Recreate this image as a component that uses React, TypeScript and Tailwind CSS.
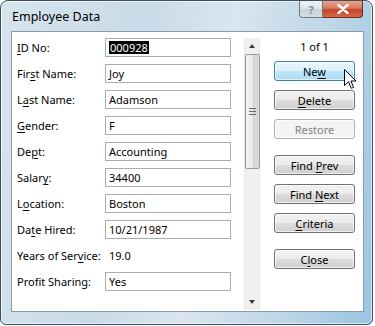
import type { ReactNode } from "react";

type Field = {
  label: string;
  key?: number;
  value: string;
  box?: boolean;
  selected?: boolean;
};

const fields: Field[] = [
  { label: "ID No:", key: 0, value: "000928", box: true, selected: true },
  { label: "First Name:", key: 3, value: "Joy", box: true },
  { label: "Last Name:", key: 1, value: "Adamson", box: true },
  { label: "Gender:", key: 0, value: "F", box: true },
  { label: "Dept:", key: 2, value: "Accounting", box: true },
  { label: "Salary:", key: 5, value: "34400", box: true },
  { label: "Location:", key: 1, value: "Boston", box: true },
  { label: "Date Hired:", key: 2, value: "10/21/1987", box: true },
  { label: "Years of Service:", key: 12, value: "19.0" },
  { label: "Profit Sharing:", value: "Yes", box: true },
];

function Keyed({ text, at }: { text: string; at?: number }) {
  if (at === undefined) return <span>{text}</span>;
  return (
    <span className="whitespace-pre">
      {text.slice(0, at)}
      <span className="underline decoration-1 underline-offset-[1.5px]">
        {text[at]}
      </span>
      {text.slice(at + 1)}
    </span>
  );
}

function VistaButton({
  children,
  hover,
  disabled,
  className = "",
}: {
  children: ReactNode;
  hover?: boolean;
  disabled?: boolean;
  className?: string;
}) {
  let look =
    "border-[#707070] bg-[linear-gradient(#f2f2f2_0%,#ebebeb_48%,#dddddd_52%,#cfcfcf_100%)] text-black";
  if (hover)
    look =
      "border-[#3c7fb1] bg-[linear-gradient(#eaf6fd_0%,#d9f0fc_48%,#bee6fd_52%,#a7d9f5_100%)] text-black";
  if (disabled) look = "border-[#adb2b5] bg-[#f4f4f4] text-[#838383]";
  return (
    <div
      className={`flex h-[20px] w-[81px] items-center justify-center rounded-[3px] border leading-none shadow-[inset_0_0_0_1px_rgba(255,255,255,0.7)] ${look} ${className}`}
    >
      {children}
    </div>
  );
}

function Cursor() {
  return (
    <svg
      className="absolute left-[343px] top-[68px]"
      width="13"
      height="21"
      viewBox="0 0 13 21"
    >
      <path
        d="M0.5 0.5 L0.5 16.5 L4.5 12.8 L7.3 19.3 L9.6 18.3 L6.9 12 L12 12 Z"
        fill="#fff"
        stroke="#000"
        strokeWidth="1"
        strokeLinejoin="round"
      />
    </svg>
  );
}

function Scrollbar() {
  return (
    <div className="mt-[6px] flex h-[272px] w-[16px] flex-col items-center border-x border-[#e6e6e6] bg-[#f0f0f0]">
      <div className="flex h-[16px] w-full items-center justify-center">
        <div className="h-0 w-0 border-x-[3.5px] border-b-[4px] border-x-transparent border-b-[#3c3c3c]" />
      </div>
      <div className="flex h-[115px] w-[15px] flex-col items-center justify-center gap-[2px] rounded-[2px] border border-[#9a9a9a] bg-[linear-gradient(90deg,#f4f4f4_0%,#e8e8e8_50%,#d4d4d4_51%,#dcdcdc_100%)]">
        <div className="h-px w-[7px] bg-[#6b6b6b]" />
        <div className="h-px w-[7px] bg-[#6b6b6b]" />
        <div className="h-px w-[7px] bg-[#6b6b6b]" />
      </div>
      <div className="flex-1" />
      <div className="flex h-[16px] w-full items-center justify-center">
        <div className="h-0 w-0 border-x-[3.5px] border-t-[4px] border-x-transparent border-t-[#3c3c3c]" />
      </div>
    </div>
  );
}

export default function App() {
  return (
    <div className="h-[326px] w-[375px] bg-white font-['Noto_Sans',sans-serif] text-[11px] text-black">
      <div className="relative flex h-[325px] w-[373px] flex-col rounded-t-[8px] rounded-b-[6px] border border-[#3e4f5e] bg-[linear-gradient(100deg,#d6e4ee_0%,#c9dbe8_35%,#d9e6ef_55%,#bcd5e6_80%,#98c5e3_100%)] shadow-[inset_0_0_0_1px_rgba(255,255,255,0.6)]">
        <div className="flex h-[30px] items-start">
          <div className="pl-[11px] pt-[7px] text-[12.5px] text-black">
            Employee Data
          </div>
          <div className="flex-1" />
          <div className="mr-[9px] flex">
            <div className="flex h-[17px] w-[24px] items-center justify-center rounded-bl-[4px] border border-t-0 border-[#6b7b8a] bg-[linear-gradient(#eef2f5_0%,#dce4ea_50%,#c7d1d9_51%,#d6dee4_100%)] text-[11px] font-bold leading-none text-[#7d8c9a]">
              ?
            </div>
            <div className="flex h-[17px] w-[40px] items-center justify-center rounded-br-[4px] border border-l-0 border-t-0 border-[#6e2a1c] bg-[linear-gradient(#e8a48f_0%,#d87a5e_45%,#c2412a_55%,#d8694a_100%)]">
              <svg width="12" height="10" viewBox="0 0 12 10">
                <path
                  d="M1.5 1 L10.5 9 M10.5 1 L1.5 9"
                  stroke="#fff"
                  strokeWidth="2.4"
                  strokeLinecap="round"
                />
              </svg>
            </div>
          </div>
        </div>

        <div className="relative mb-[12px] ml-[10px] mr-[8px] flex flex-1 items-start border border-[#8b9aa9] bg-white">
          <div className="flex flex-col gap-[7px] pl-[5px] pt-[6px]">
            {fields.map((f) => (
              <div key={f.label} className="flex h-[19px] items-center">
                <div className="w-[88px] leading-none">
                  <Keyed text={f.label} at={f.key} />
                </div>
                {f.box ? (
                  <div className="flex h-[19px] w-[126px] items-center border border-[#a7adb5] px-[3px] leading-none">
                    <span
                      className={
                        f.selected ? "bg-black px-px py-[1px] text-white" : ""
                      }
                    >
                      {f.value}
                    </span>
                  </div>
                ) : (
                  <div className="w-[126px] pl-[4px] leading-none">
                    {f.value}
                  </div>
                )}
              </div>
            ))}
          </div>

          <div className="ml-[13px]">
            <Scrollbar />
          </div>

          <div className="ml-[14px] flex flex-col items-center pt-[9px]">
            <div className="h-[20px] leading-none">1 of 1</div>
            <div className="flex flex-col gap-[9px]">
              <VistaButton hover>
                <Keyed text="New" at={2} />
              </VistaButton>
              <VistaButton>
                <Keyed text="Delete" at={0} />
              </VistaButton>
              <VistaButton disabled>Restore</VistaButton>
              <VistaButton className="mt-[7px]">
                <Keyed text="Find Prev" at={5} />
              </VistaButton>
              <VistaButton>
                <Keyed text="Find Next" at={5} />
              </VistaButton>
              <VistaButton>
                <Keyed text="Criteria" at={0} />
              </VistaButton>
              <VistaButton className="mt-[7px]">
                <Keyed text="Close" at={1} />
              </VistaButton>
            </div>
          </div>
        </div>
        <Cursor />
      </div>
    </div>
  );
}
